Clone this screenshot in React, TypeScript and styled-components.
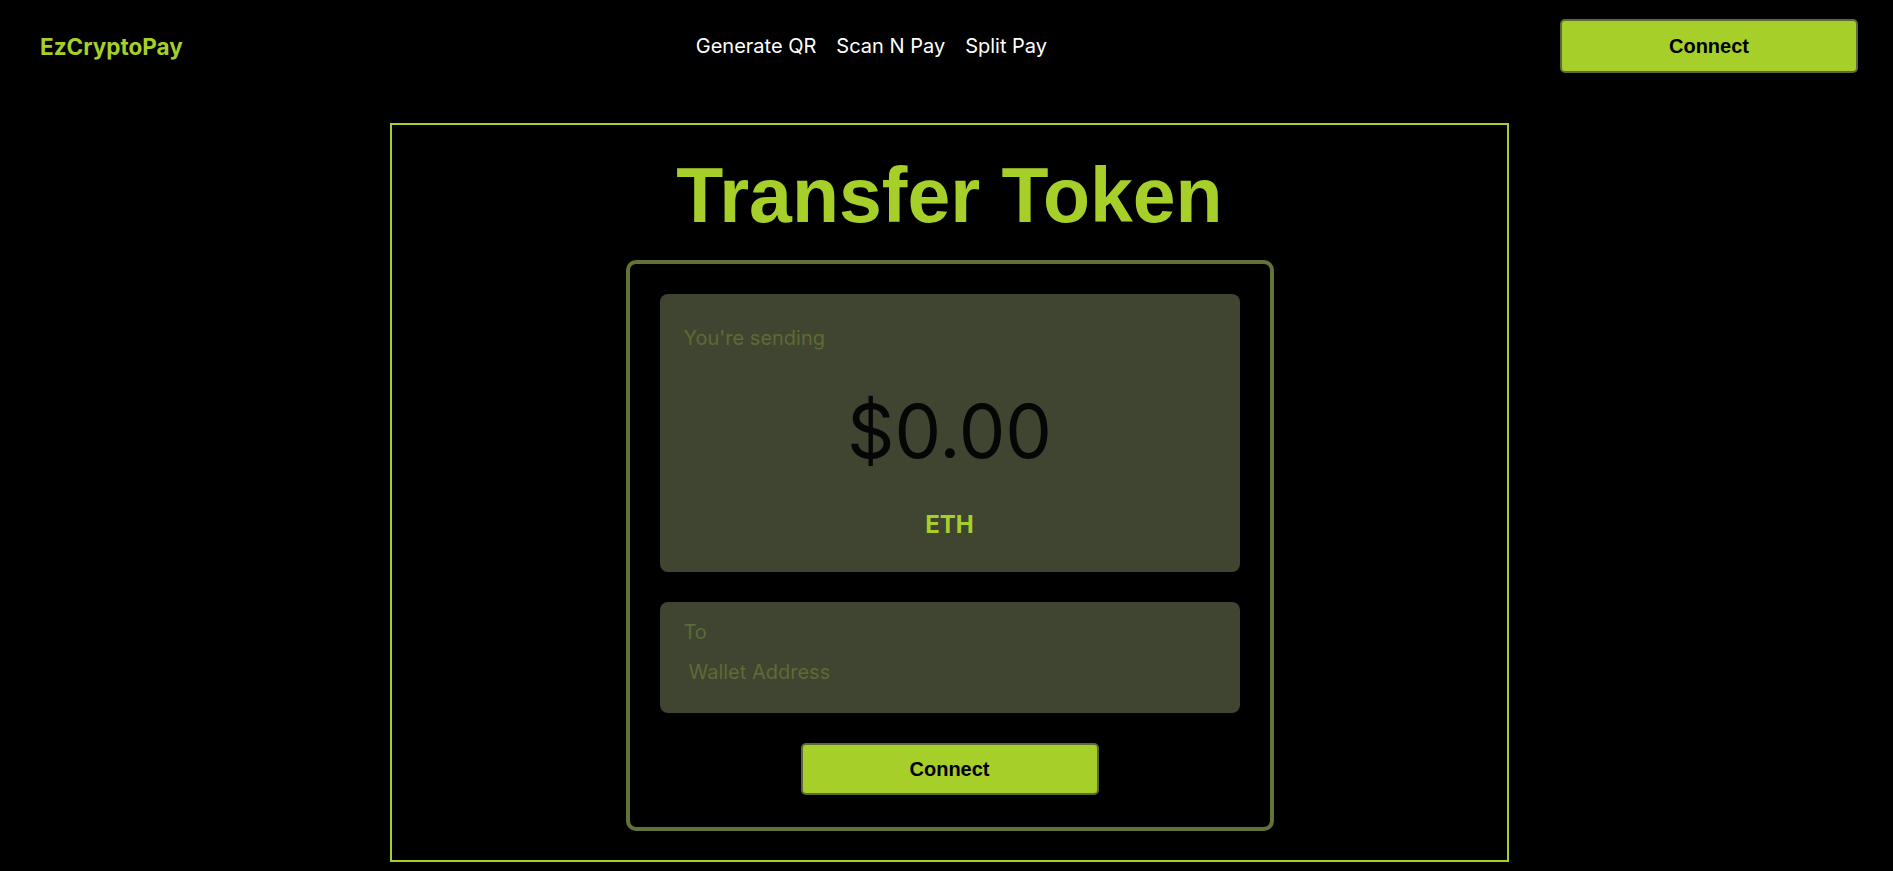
import React from 'react';
import styled, { createGlobalStyle } from 'styled-components';

const lime = '#a6cf2a';
const olive = '#637237';
const muted = '#5d6b34';
const panelBg = '#3f4530';

const GlobalStyle = createGlobalStyle`
  html, body {
    margin: 0;
    padding: 0;
    background: #000;
    font-family: 'Inter', 'Noto Sans', sans-serif;
  }

  * {
    box-sizing: border-box;
  }
`;

const Header = styled.header`
  display: flex;
  align-items: center;
  justify-content: space-between;
  padding: 19px 35px 18px 40px;
`;

const Logo = styled.div`
  font-size: 22.5px;
  font-weight: 700;
  color: ${lime};
`;

const Nav = styled.nav`
  display: flex;
  align-items: center;
  gap: 20px;
`;

const NavLink = styled.a`
  font-size: 20px;
  color: #fff;
  text-decoration: none;
  cursor: pointer;
`;

const Button = styled.button<{ height?: number }>`
  width: 298px;
  height: ${({ height }) => height ?? 54}px;
  background: ${lime};
  border: 2px solid #5e6a36;
  border-radius: 5px;
  color: #000;
  font-family: 'Liberation Sans', Arial, sans-serif;
  font-size: 20px;
  font-weight: 700;
  cursor: pointer;
`;

const Main = styled.main`
  display: flex;
  justify-content: center;
  padding: 32px 0 0 6px;
`;

const Frame = styled.section`
  width: 1119px;
  height: 739px;
  border: 2px solid ${lime};
  display: flex;
  flex-direction: column;
  align-items: center;
`;

const Title = styled.h1`
  margin: 26px 0 20px;
  font-family: 'Liberation Sans', Arial, sans-serif;
  font-size: 77px;
  font-weight: 700;
  line-height: normal;
  color: ${lime};
`;

const Card = styled.div`
  width: 648px;
  border: 4px solid ${olive};
  border-radius: 10px;
  padding: 30px 30px 32px;
  display: flex;
  flex-direction: column;
  gap: 30px;
`;

const Panel = styled.div`
  background: ${panelBg};
  border-radius: 8px;
  display: flex;
  flex-direction: column;
`;

const SendPanel = styled(Panel)`
  padding: 32px 24px 33px;
`;

const ToPanel = styled(Panel)`
  padding: 18px 24px 29px;
`;

const Label = styled.span`
  font-size: 20px;
  line-height: normal;
  color: ${muted};
`;

const Amount = styled.div`
  margin: 36px 0 34px;
  text-align: center;
  font-size: 74px;
  font-weight: 400;
  line-height: normal;
  color: #060606;
`;

const Symbol = styled.div`
  text-align: center;
  font-size: 24px;
  font-weight: 700;
  line-height: normal;
  color: ${lime};
`;

const AddressInput = styled.input`
  margin-top: 16px;
  width: 100%;
  height: 24px;
  padding: 0 5px;
  border: none;
  outline: none;
  background: transparent;
  font-family: 'Inter', sans-serif;
  font-size: 20px;
  color: ${lime};

  &::placeholder {
    color: ${muted};
  }
`;

export default function App() {
  return (
    <>
      <GlobalStyle />
      <Header>
        <Logo>EzCryptoPay</Logo>
        <Nav>
          <NavLink>Generate QR</NavLink>
          <NavLink>Scan N Pay</NavLink>
          <NavLink>Split Pay</NavLink>
        </Nav>
        <Button>Connect</Button>
      </Header>
      <Main>
        <Frame>
          <Title>Transfer Token</Title>
          <Card>
            <SendPanel>
              <Label>You're sending</Label>
              <Amount>$0.00</Amount>
              <Symbol>ETH</Symbol>
            </SendPanel>
            <ToPanel>
              <Label>To</Label>
              <AddressInput placeholder="Wallet Address" />
            </ToPanel>
            <Button height={52} style={{ alignSelf: 'center' }}>Connect</Button>
          </Card>
        </Frame>
      </Main>
    </>
  );
}
